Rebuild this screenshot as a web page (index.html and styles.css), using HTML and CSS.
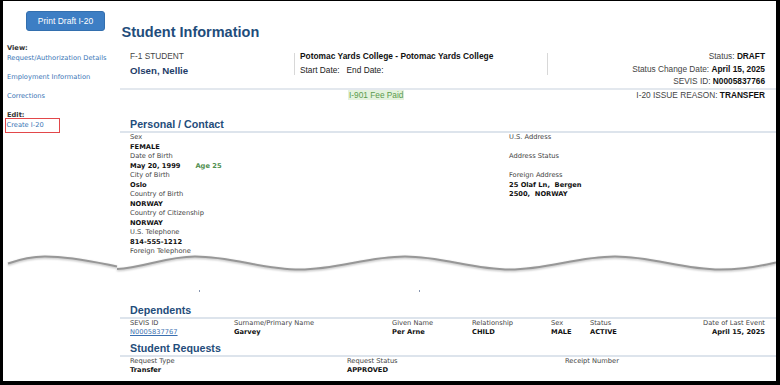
FILE: index.html
```html
<!DOCTYPE html>
<html lang="en">
<head>
<meta charset="utf-8">
<title>Student Information</title>
<link rel="stylesheet" href="styles.css">
</head>
<body>
<div class="frame">
  <div class="upper">
    <aside class="sidebar">
      <button class="print-btn" type="button">Print Draft I-20</button>
      <nav class="nav">
        <div class="nav-title">View:</div>
        <a class="nav-link" href="#">Request/Authorization Details</a>
        <a class="nav-link gap" href="#">Employment Information</a>
        <a class="nav-link gap" href="#">Corrections</a>
        <div class="nav-title gap">Edit:</div>
        <a class="nav-link boxed" href="#">Create I-20</a>
      </nav>
    </aside>
    <main class="main">
      <h1 class="page-title">Student Information</h1>
      <div class="summary">
        <div class="col-student">
          <div class="student-type">F-1 STUDENT</div>
          <div class="student-name">Olsen, Nellie</div>
        </div>
        <span class="divider"></span>
        <div class="col-school">
          <div class="school">Potomac Yards College - Potomac Yards College</div>
          <div class="dates">Start Date:&nbsp;&nbsp; End Date:</div>
        </div>
        <span class="divider"></span>
        <div class="col-status">
          <div class="st1">Status: <b>DRAFT</b></div>
          <div class="st2">Status Change Date: <b>April 15, 2025</b></div>
          <div class="st3">SEVIS ID: <b>N0005837766</b></div>
        </div>
      </div>
      <div class="summary-rule"></div>
      <div class="fee-row">
        <span class="fee">I-901 Fee Paid</span>
        <span class="reason">I-20 ISSUE REASON: <b>TRANSFER</b></span>
      </div>
      <section>
        <h2 class="section-title first">Personal / Contact</h2>
        <div class="personal-grid">
          <div class="fields">
            <div class="lbl">Sex</div>
            <div class="val">FEMALE</div>
            <div class="lbl">Date of Birth</div>
            <div class="val">May 20, 1999<span class="age">Age 25</span></div>
            <div class="lbl">City of Birth</div>
            <div class="val">Oslo</div>
            <div class="lbl">Country of Birth</div>
            <div class="val">NORWAY</div>
            <div class="lbl">Country of Citizenship</div>
            <div class="val">NORWAY</div>
            <div class="lbl">U.S. Telephone</div>
            <div class="val">814-555-1212</div>
            <div class="lbl">Foreign Telephone</div>
          </div>
          <div class="fields">
            <div class="lbl">U.S. Address</div>
            <div class="lbl gap">Address Status</div>
            <div class="lbl gap">Foreign Address</div>
            <div class="val">25 Olaf Ln,&nbsp; Bergen</div>
            <div class="val">2500,&nbsp; NORWAY</div>
          </div>
        </div>
      </section>
    </main>
  </div>

  <svg class="wave" viewBox="0 0 773 30" width="773" height="30" aria-hidden="true">
    <path d="M5,13.5 C19,8.5 29,6.5 42,6.5 C69,6.5 94,12.5 114,16.5"/>
    <path d="M114,19 C140,18 163,6.5 192,6.5 C230,6.5 259,19.5 297,19.5 C335,19.5 364,6.5 402,6.5 C440,6.5 469,19.5 507,19.5 C545,19.5 574,6.5 612,6.5 C650,6.5 679,19.5 717,19.5 C739,19.5 758,16 773,12.5"/>
  </svg>

  <div class="lower">
    <div class="dots"><span class="dot"></span><span class="dot dot-2"></span></div>
    <section>
      <h2 class="section-title">Dependents</h2>
      <div class="dep-table">
        <div class="lbl">SEVIS ID</div>
        <div class="lbl">Surname/Primary Name</div>
        <div class="lbl">Given Name</div>
        <div class="lbl">Relationship</div>
        <div class="lbl">Sex</div>
        <div class="lbl">Status</div>
        <div class="lbl right">Date of Last Event</div>
        <div><a class="link" href="#">N0005837767</a></div>
        <div class="val">Garvey</div>
        <div class="val">Per Arne</div>
        <div class="val">CHILD</div>
        <div class="val">MALE</div>
        <div class="val">ACTIVE</div>
        <div class="val right">April 15, 2025</div>
      </div>
    </section>
    <section>
      <h2 class="section-title spaced">Student Requests</h2>
      <div class="req-table">
        <div class="lbl">Request Type</div>
        <div class="lbl">Request Status</div>
        <div class="lbl">Receipt Number</div>
        <div class="val">Transfer</div>
        <div class="val">APPROVED</div>
        <div class="val"></div>
      </div>
    </section>
  </div>
</div>
</body>
</html>
```

FILE: styles.css
```css
* { box-sizing: border-box; }

body {
  margin: 0;
  background: #000;
}

.frame {
  margin: 1px 4px 4px 3px;
  width: 773px;
  height: 380px;
  background: #fff;
  overflow: hidden;
  font-family: "DejaVu Sans", Verdana, sans-serif;
}

.upper {
  display: flex;
}

/* ---------- sidebar ---------- */
.sidebar {
  width: 117px;
  flex: none;
}

.print-btn {
  display: block;
  margin: 10px 0 0 23px;
  width: 79px;
  height: 20px;
  padding: 0;
  background: #3d7ec4;
  border: 1px solid #336fae;
  border-radius: 3px;
  color: #fff;
  font-family: "Liberation Sans", Arial, sans-serif;
  font-size: 8.5px;
}

.nav {
  padding-left: 4px;
  margin-top: 13px;
  font-size: 6.7px;
  line-height: 9.5px;
}

.nav-title {
  font-weight: bold;
  color: #333;
}

.nav-link {
  display: block;
  color: #3a76b6;
  text-decoration: none;
}

.gap {
  margin-top: 9.5px;
}

.boxed {
  width: fit-content;
  margin: -2px 0 0 -2.5px;
  padding: 1.5px 15px 1.5px 1px;
  border: 1.5px solid #e2474a;
}

/* ---------- main ---------- */
.main {
  flex: 1;
  min-width: 0;
  font-family: "Liberation Sans", Arial, sans-serif;
}

.page-title {
  margin: 22px 0 0 1.5px;
  font-size: 14.5px;
  line-height: 18px;
  font-weight: bold;
  color: #1f4d7b;
}

.summary {
  display: flex;
  align-items: flex-start;
  margin-top: 9px;
  padding: 0 11px 0 10px;
  height: 37px;
  font-size: 8.3px;
}

.col-student {
  width: 164px;
  flex: none;
}

.student-type {
  line-height: 13px;
  color: #444;
}

.student-name {
  line-height: 15px;
  font-size: 9.7px;
  font-weight: bold;
  color: #1e3c68;
}

.divider {
  flex: none;
  width: 1px;
  height: 22.5px;
  margin-top: 2.5px;
  background: #d8d8d8;
}

.col-school {
  flex: none;
  width: 252px;
  padding-left: 5px;
}

.school {
  line-height: 13px;
  font-size: 8.4px;
  font-weight: bold;
  color: #111;
}

.dates {
  line-height: 15px;
  color: #222;
}

.col-status {
  flex: 1;
  text-align: right;
  color: #444;
}

.col-status b {
  color: #111;
}

.st1 { line-height: 12px; }
.st2 { line-height: 14px; }
.st3 { line-height: 11px; }

.summary-rule {
  height: 2px;
  margin-top: 1px;
  background: #e3e8ee;
}

.fee-row {
  display: flex;
  justify-content: space-between;
  padding: 0 11px 0 228px;
  line-height: 10px;
  font-size: 8.3px;
}

.fee {
  background: #e4f2dd;
  color: #5a9b4c;
  padding: 0 1px;
}

.reason {
  color: #444;
}

.reason b {
  color: #111;
}

/* ---------- sections ---------- */
.section-title {
  margin: 0;
  padding-left: 10px;
  font-family: "Liberation Sans", Arial, sans-serif;
  font-size: 10.7px;
  line-height: 13px;
  font-weight: bold;
  color: #1f4d7b;
  border-bottom: 2px solid #dde4ec;
}

.section-title.first {
  margin-top: 18px;
}

.section-title.spaced {
  margin-top: 4px;
}

.personal-grid {
  display: grid;
  grid-template-columns: 379px 1fr;
  padding-left: 10px;
  font-family: "DejaVu Sans", Verdana, sans-serif;
  font-size: 6.7px;
  line-height: 9.5px;
}

.lbl {
  color: #444;
}

.val {
  font-weight: bold;
  color: #111;
}

.age {
  margin-left: 15px;
  color: #4f8f4f;
}

.right {
  text-align: right;
}

/* ---------- torn edge ---------- */
.wave {
  display: block;
  margin-top: -7px;
  width: 773px;
  height: 30px;
  filter: drop-shadow(0 1.5px 1px rgba(0, 0, 0, 0.28));
}

.wave path {
  fill: none;
  stroke: #979797;
  stroke-width: 2;
}

/* ---------- lower part ---------- */
.lower {
  margin-left: 117px;
}

.dots {
  display: flex;
  height: 24px;
}

.dot {
  width: 1px;
  height: 2px;
  margin: 10.5px 0 0 79px;
  background: #8896b0;
}

.dot-2 {
  margin-left: 219px;
}

.dep-table,
.req-table {
  display: grid;
  padding: 0 11px 0 10px;
  font-size: 6.7px;
  line-height: 9.5px;
}

.dep-table {
  grid-template-columns: 104px 158px 80px 79px 39px 1fr auto;
}

.req-table {
  grid-template-columns: 217px 218px 1fr;
}

.link {
  color: #3a6fb0;
  text-decoration: underline;
}
```
